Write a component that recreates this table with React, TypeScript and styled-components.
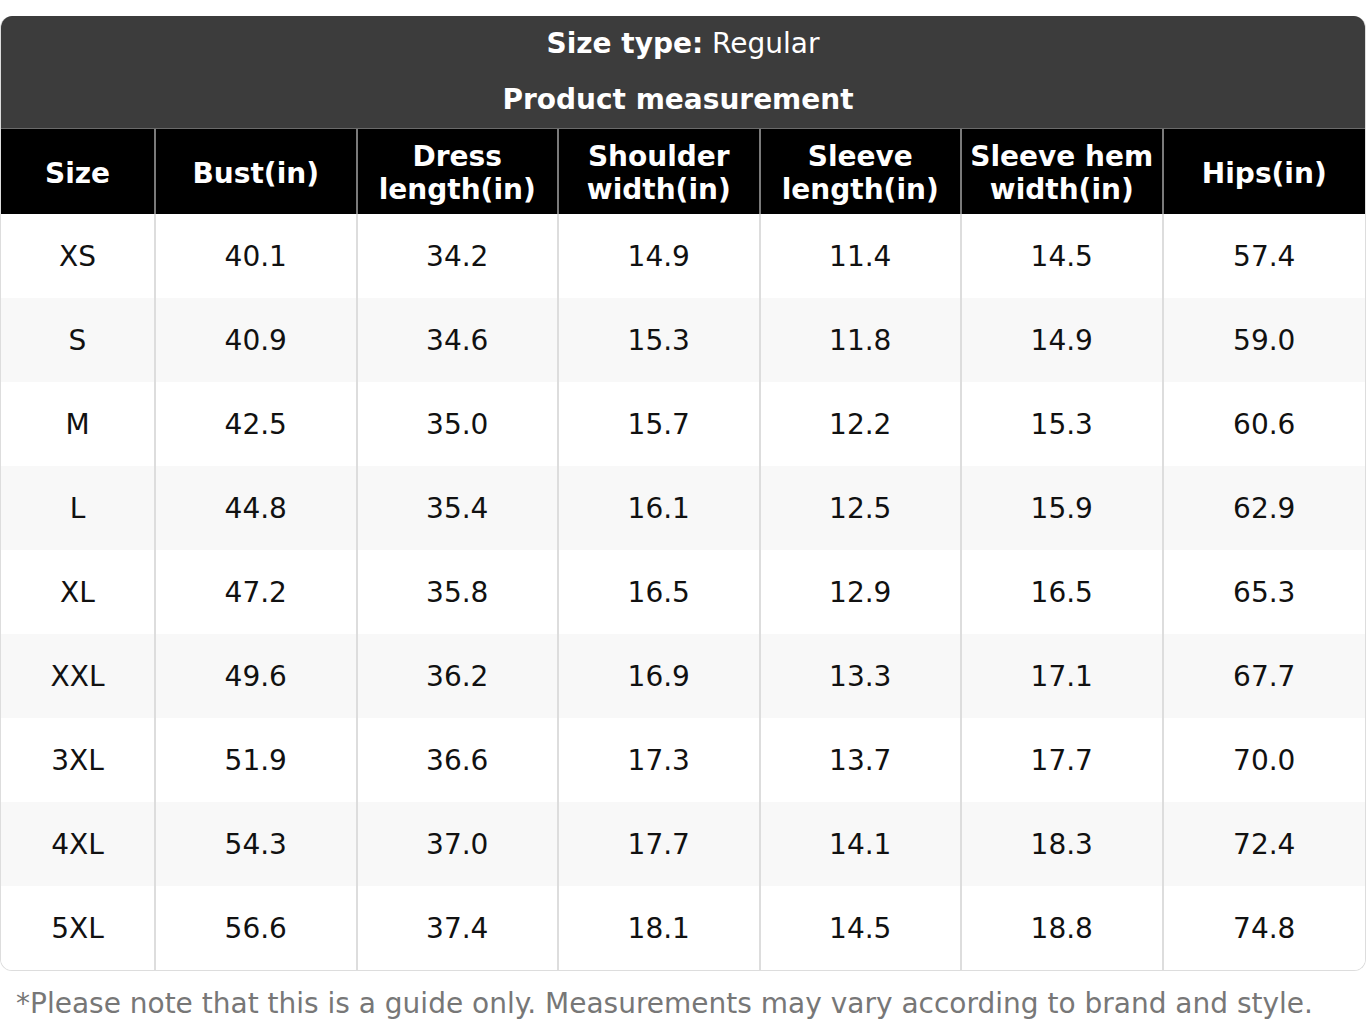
import React from 'react'
import styled, {createGlobalStyle} from 'styled-components'

const GlobalStyle = createGlobalStyle`
  html, body {
    margin: 0;
    padding: 0;
    background: #ffffff;
  }
  body {
    font-family: 'DejaVu Sans', 'Liberation Sans', sans-serif;
  }
`

const Page = styled.div`
  padding-top: 16px;
  width: 1366px;
`

const Card = styled.div`
  border: 1px solid #dddddd;
  border-top: none;
  border-radius: 12px;
  overflow: hidden;
  background: #ffffff;
`

const TitleBlock = styled.div`
  background: #3c3c3c;
  color: #ffffff;
  text-align: center;
  border-bottom: 1px solid #6a6a6a;
`

const TitleLine = styled.div<{$shift?: number}>`
  height: 56px;
  line-height: 56px;
  font-size: 28px;
  font-weight: 400;
  white-space: nowrap;
  padding-right: ${p => p.$shift ?? 0}px;
`

const Strong = styled.b`
  font-weight: 700;
`

const Row = styled.div<{$head?: boolean; $alt?: boolean}>`
  display: grid;
  grid-template-columns: 155px repeat(6, 1fr);
  height: ${p => (p.$head ? 85 : 84)}px;
  background: ${p => (p.$head ? '#000000' : p.$alt ? '#f8f8f8' : '#ffffff')};
`

const Cell = styled.div<{$head?: boolean}>`
  display: flex;
  align-items: center;
  justify-content: center;
  text-align: center;
  font-size: 28px;
  line-height: 33px;
  padding-top: ${p => (p.$head ? 3 : 1)}px;
  box-sizing: border-box;
  font-weight: ${p => (p.$head ? 700 : 400)};
  color: ${p => (p.$head ? '#ffffff' : '#111111')};
  border-right: 2px solid ${p => (p.$head ? '#7a7a7a' : '#dddddd')};

  &:last-child {
    border-right: none;
  }
`

const Note = styled.p`
  margin: 16px 0 0 16px;
  font-size: 28px;
  line-height: 33px;
  color: #777777;
  white-space: nowrap;
`

const headers = [
  ['Size'],
  ['Bust(in)'],
  ['Dress', 'length(in)'],
  ['Shoulder', 'width(in)'],
  ['Sleeve', 'length(in)'],
  ['Sleeve hem', 'width(in)'],
  ['Hips(in)'],
]

const rows = [
  ['XS', '40.1', '34.2', '14.9', '11.4', '14.5', '57.4'],
  ['S', '40.9', '34.6', '15.3', '11.8', '14.9', '59.0'],
  ['M', '42.5', '35.0', '15.7', '12.2', '15.3', '60.6'],
  ['L', '44.8', '35.4', '16.1', '12.5', '15.9', '62.9'],
  ['XL', '47.2', '35.8', '16.5', '12.9', '16.5', '65.3'],
  ['XXL', '49.6', '36.2', '16.9', '13.3', '17.1', '67.7'],
  ['3XL', '51.9', '36.6', '17.3', '13.7', '17.7', '70.0'],
  ['4XL', '54.3', '37.0', '17.7', '14.1', '18.3', '72.4'],
  ['5XL', '56.6', '37.4', '18.1', '14.5', '18.8', '74.8'],
]

export default function App() {
  return (
    <Page>
      <GlobalStyle />
      <Card>
        <TitleBlock>
          <TitleLine>
            <Strong>Size type:</Strong> Regular
          </TitleLine>
          <TitleLine $shift={10}>
            <Strong>Product measurement</Strong>
          </TitleLine>
        </TitleBlock>
        <Row $head>
          {headers.map((lines, i) => (
            <Cell $head key={i}>
              <span>
                {lines.map((l, j) => (
                  <React.Fragment key={j}>
                    {j > 0 && <br />}
                    {l}
                  </React.Fragment>
                ))}
              </span>
            </Cell>
          ))}
        </Row>
        {rows.map((r, i) => (
          <Row key={r[0]} $alt={i % 2 === 1}>
            {r.map((v, j) => (
              <Cell key={j}>{v}</Cell>
            ))}
          </Row>
        ))}
      </Card>
      <Note>*Please note that this is a guide only. Measurements may vary according to brand and style.</Note>
    </Page>
  )
}
